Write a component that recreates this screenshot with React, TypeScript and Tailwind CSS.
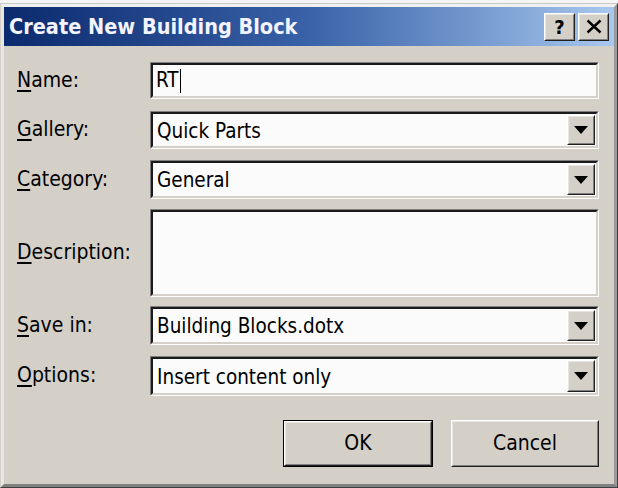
import React from "react";

const font = "font-['DejaVu_Sans_Condensed','Liberation_Sans',Arial,sans-serif]";

function Sunken({ children, className = "" }: { children?: React.ReactNode; className?: string }) {
  return (
    <div className={`border border-t-[#808080] border-l-[#808080] border-b-white border-r-white ${className}`}>
      <div className="h-full border-2 border-t-[#1a1a1a] border-l-[#1a1a1a] border-b-[#d4d0c8] border-r-[#d4d0c8] bg-[#fbfbfb]">
        {children}
      </div>
    </div>
  );
}

function Raised({ children, className = "" }: { children?: React.ReactNode; className?: string }) {
  return (
    <div className={`border border-t-white border-l-white border-b-[#202020] border-r-[#202020] ${className}`}>
      <div className="h-full border border-t-[#e8e6e2] border-l-[#e8e6e2] border-b-[#808080] border-r-[#808080] bg-[#d4d0c8] flex items-center justify-center">
        {children}
      </div>
    </div>
  );
}

function Label({ k, rest }: { k: string; rest: string }) {
  return (
    <div className="w-[146px] shrink-0 pl-[13px] text-[21px] text-black">
      <span className="underline underline-offset-[3px]">{k}</span>
      {rest}
    </div>
  );
}

function Combo({ value }: { value: string }) {
  return (
    <Sunken className="flex-1 h-full">
      <div className="flex h-full items-center">
        <div className="flex-1 pl-[4px] pt-[2px] text-[20.5px] text-black">{value}</div>
        <Raised className="mr-[1px] h-[calc(100%-2px)] w-[28px]">
          <svg width="14" height="8" viewBox="0 0 14 8">
            <path d="M0 0 H14 L7 8 Z" fill="#000" />
          </svg>
        </Raised>
      </div>
    </Sunken>
  );
}

export default function App() {
  return (
    <div className={`w-[618px] h-[488px] bg-[#f4f4f4] pt-[3px] ${font}`}>
      <div className="h-[485px] border border-t-[#c8c8c8] border-l-[#d4d0c8] border-b-[#404040] border-r-[#404040]">
        <div className="flex h-full flex-col border-[3px] border-t-[#f0f0f0] border-l-[#e8e6e2] border-b-[#808080] border-r-[#9a9a9a] bg-[#d4d0c8]">
          {/* Title bar */}
          <div className="flex h-[39px] items-center bg-gradient-to-r from-[#0c2a6e] via-[#3a62a8] to-[#a8c8ee] pl-[5px] pr-[5px]">
            <div className="flex-1 pt-[2px] text-[21.5px] font-bold text-[#f4f4ff]">Create New Building Block</div>
            <Raised className="h-[28px] w-[31px]">
              <span className="text-[20px] font-bold leading-none text-black">?</span>
            </Raised>
            <Raised className="ml-[3px] h-[28px] w-[31px]">
              <svg width="16" height="15" viewBox="0 0 16 15">
                <path d="M1.5 1.5 L14.5 13.5 M14.5 1.5 L1.5 13.5" stroke="#000" strokeWidth="2.4" />
              </svg>
            </Raised>
          </div>

          {/* Body */}
          <div className="flex flex-1 flex-col pr-[15px] pt-[16px]">
            <div className="flex h-[37px] items-center">
              <Label k="N" rest="ame:" />
              <Sunken className="flex-1 h-full">
                <div className="flex h-full items-center pl-[3px] text-[20.5px] text-black">
                  RT<span className="ml-[1px] inline-block h-[24px] w-[1px] bg-black" />
                </div>
              </Sunken>
            </div>

            <div className="mt-[12px] flex h-[38px] items-center">
              <Label k="G" rest="allery:" />
              <Combo value="Quick Parts" />
            </div>

            <div className="mt-[11px] flex h-[39px] items-center">
              <Label k="C" rest="ategory:" />
              <Combo value="General" />
            </div>

            <div className="mt-[10px] flex h-[88px] items-center">
              <Label k="D" rest="escription:" />
              <Sunken className="flex-1 h-full" />
            </div>

            <div className="mt-[9px] flex h-[39px] items-center">
              <Label k="S" rest="ave in:" />
              <Combo value="Building Blocks.dotx" />
            </div>

            <div className="mt-[11px] flex h-[40px] items-center">
              <Label k="O" rest="ptions:" />
              <Combo value="Insert content only" />
            </div>

            <div className="mt-[24px] flex justify-end gap-[18px]">
              <div className="h-[47px] w-[150px] border border-black">
                <Raised className="h-full">
                  <span className="text-[21px] text-black">OK</span>
                </Raised>
              </div>
              <Raised className="h-[47px] w-[148px]">
                <span className="text-[21px] text-black">Cancel</span>
              </Raised>
            </div>
          </div>
        </div>
      </div>
    </div>
  );
}
